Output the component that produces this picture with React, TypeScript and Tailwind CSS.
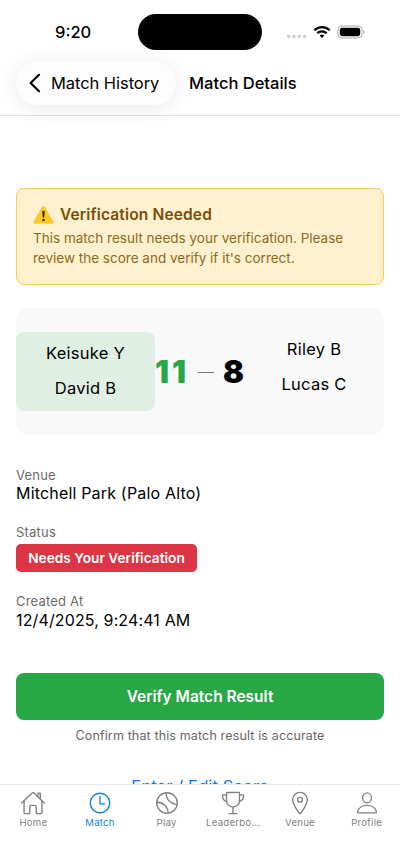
import type { ComponentType, ReactNode } from "react";
import { IoHomeOutline, IoLocationOutline, IoTimeOutline, IoTrophyOutline } from "react-icons/io5";

type IconProps = { size?: number; className?: string };
type Tab = { label: string; icon: ComponentType<IconProps>; active?: boolean };

const tabs: Tab[] = [
  { label: "Home", icon: IoHomeOutline },
  { label: "Match", icon: IoTimeOutline, active: true },
  { label: "Play", icon: BallIcon },
  { label: "Leaderbo...", icon: IoTrophyOutline },
  { label: "Venue", icon: IoLocationOutline },
  { label: "Profile", icon: ProfileIcon },
];

export default function App() {
  return (
    <div className="flex h-[866px] w-[400px] flex-col overflow-hidden bg-white font-['Inter',sans-serif] text-black">
      <header className="shrink-0 border-b border-[#e4e4e4]">
        <StatusBar />
        <div className="flex h-[54px] items-start px-4">
          <button className="flex h-11 w-40 items-center rounded-full bg-[#fdfdfd] pl-3 shadow-[0_3px_22px_rgba(0,0,0,0.09)]">
            <svg width="14" height="20" viewBox="0 0 14 20" fill="none" stroke="#000" strokeWidth="2.2" strokeLinecap="round" strokeLinejoin="round">
              <path d="M11 1.8 2.6 10 11 18.2" />
            </svg>
            <span className="ml-[9px] pt-px text-[16.5px] tracking-[-0.06px] whitespace-nowrap">Match History</span>
          </button>
          <h1 className="ml-[13px] text-[16.5px] leading-[45px] font-medium whitespace-nowrap">Match Details</h1>
        </div>
      </header>

      <main className="min-h-0 flex-1 overflow-hidden px-4 pt-[72px]">
        <section className="h-[97px] rounded-lg border border-[#fcca55] bg-[#fff1cf] px-4 pt-4">
          <h2 className="flex h-5 items-center gap-[6px] text-[15.5px] font-semibold tracking-[0.15px] text-[#7a4e0a]">
            <WarningIcon />
            <span className="whitespace-nowrap">Verification Needed</span>
          </h2>
          <p className="mt-[3px] text-[13.5px] leading-5 whitespace-nowrap text-[#8b6b20]">
            This match result needs your verification. Please
            <br />
            review the score and verify if it's correct.
          </p>
        </section>

        <section className="mt-[23px] flex h-[127px] items-start rounded-xl bg-[#f9f9f9] pt-6">
          <div className="flex h-[79px] w-[139px] flex-col items-center rounded-lg bg-[#e0efe4] pt-1">
            <Player>Keisuke Y</Player>
            <Player>David B</Player>
          </div>
          <div className="flex h-[79px] w-[89px] items-center justify-between pt-px text-[31px] font-black">
            <span className="tracking-[3px] text-[#28a745]">11</span>
            <span className="mt-px h-px w-[16px] bg-[#777]" />
            <span>8</span>
          </div>
          <div className="flex w-[140px] flex-col items-center">
            <Player>Riley B</Player>
            <Player>Lucas C</Player>
          </div>
        </section>

        <dl className="mt-[31px] whitespace-nowrap">
          <Label>Venue</Label>
          <dd className="h-5 text-[16px] leading-[19px] tracking-[0.18px]">Mitchell Park (Palo Alto)</dd>
          <Label className="mt-[19px]">Status</Label>
          <dd className="mt-[3px] flex h-7 w-[181px] items-center justify-center rounded-[5px] bg-[#dc3545] text-[13.7px] font-semibold text-white">
            Needs Your Verification
          </dd>
          <Label className="mt-5">Created At</Label>
          <dd className="h-5 text-[16px] leading-5 tracking-[0.13px]">12/4/2025, 9:24:41 AM</dd>
        </dl>

        <button className="mt-[43px] flex h-[47px] w-full items-center justify-center rounded-lg bg-[#28a745] text-[15.5px] font-semibold text-white">
          Verify Match Result
        </button>
        <p className="mt-[7px] text-center text-[12.5px] leading-[18px] tracking-[0.14px] text-[#666]">Confirm that this match result is accurate</p>
        <button className="mt-[31px] block w-full text-center text-[16.5px] leading-5 tracking-[0.1px] text-[#007aff]">Enter / Edit Score</button>
      </main>

      <nav className="grid h-[82px] shrink-0 grid-cols-6 border-t border-[#e8e8e8] bg-white pt-[5px]">
        {tabs.map(({ label, icon: Icon, active }) => (
          <button key={label} className={active ? "flex flex-col items-center text-[#1482d8]" : "flex flex-col items-center text-[#808080]"}>
            <Icon size={26} className="[&_*]:[stroke-width:27px]" />
            <span className="mt-px text-[9.6px] leading-3 tracking-[0.25px] whitespace-nowrap">{label}</span>
          </button>
        ))}
      </nav>
    </div>
  );
}

function StatusBar() {
  return (
    <div className="flex h-[61px] items-start pt-[14px]">
      <span className="w-[138px] pl-[55px] text-[16.5px] leading-9 font-medium">9:20</span>
      <span className="h-9 w-[124px] rounded-full bg-black" />
      <div className="ml-6 flex h-9 items-center">
        <svg width="21" height="16" viewBox="0 0 21 16" fill="#cfcfcf">
          <circle cx="2.6" cy="12.4" r="1.8" />
          <circle cx="7.9" cy="12.4" r="1.8" />
          <circle cx="13.2" cy="12.4" r="1.8" />
          <circle cx="18.5" cy="12.4" r="1.8" />
        </svg>
        <svg className="ml-[6px]" width="18" height="16" viewBox="0 0 18 16" fill="none" stroke="#000" strokeWidth="2.2">
          <path d="M1.3 6.3a10.8 10.8 0 0 1 15.4 0" />
          <path d="M4.3 9.3a6.6 6.6 0 0 1 9.4 0" />
          <path d="m9 13.9-2.3-2.3a3.3 3.3 0 0 1 4.6 0Z" fill="#000" stroke="none" />
        </svg>
        <svg className="ml-[6px]" width="28" height="14" viewBox="0 0 28 14">
          <rect x="1" y="1" width="24" height="12" rx="4" fill="#fff" stroke="#aaa" />
          <rect x="2.8" y="2.8" width="20.4" height="8.4" rx="2.4" />
          <path d="M26.5 5v4c1.4-.6 1.4-3.4 0-4Z" fill="#999" />
        </svg>
      </div>
    </div>
  );
}

function WarningIcon() {
  return (
    <svg width="21" height="18" viewBox="0 0 21 18">
      <path d="M9.4 1.1 1 15.7c-.5.9 0 1.6.9 1.6h17.2c.9 0 1.4-.7.9-1.6L11.6 1.1c-.5-.9-1.7-.9-2.2 0Z" fill="#ffcb1f" stroke="#f2b31c" strokeWidth=".5" />
      <path d="M9.2 5.8c0-1.5 2.6-1.5 2.6 0l-.6 5.2c-.1.9-1.3.9-1.4 0Z" fill="#2d2503" />
      <circle cx="10.5" cy="14" r="1.3" fill="#2d2503" />
    </svg>
  );
}

function BallIcon({ size = 26 }: IconProps) {
  return (
    <svg width={size} height={size} viewBox="0 0 26 26" fill="none" stroke="currentColor" strokeWidth="1.35">
      <circle cx="13" cy="13" r="10.3" />
      <path d="M12 2.7c.1 6.6 5 11.6 11.3 11.6M2.8 12.2c6.600 0 11.300 4.300 11.300 11" />
    </svg>
  );
}

function ProfileIcon({ size = 26 }: IconProps) {
  return (
    <svg width={size} height={size} viewBox="0 0 26 26" fill="none" stroke="currentColor" strokeWidth="1.35">
      <ellipse cx="13" cy="7.8" rx="4.400" ry="4.900" />
      <path d="M4.600 22.900h16.800c.8 0 1.200-.5 1-1.200-.9-4-4.900-6.400-9.400-6.400s-8.500 2.400-9.400 6.400c-.2.7.2 1.200 1 1.200Z" />
    </svg>
  );
}

function Player({ children }: { children: ReactNode }) {
  return <span className="h-[35px] text-[16.5px] leading-[35px] tracking-[0.25px] whitespace-nowrap">{children}</span>;
}

function Label({ children, className = "" }: { children: ReactNode; className?: string }) {
  return <dt className={`h-[18px] text-[13px] leading-[18px] tracking-[0.2px] text-[#6b6b6b] ${className}`}>{children}</dt>;
}
